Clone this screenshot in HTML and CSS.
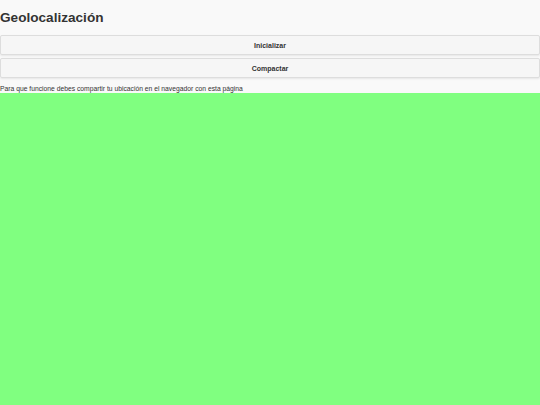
FILE: index.html
```html
<!DOCTYPE html>
<html lang="es">
<head>
<meta charset="utf-8">
<title>Geolocalización</title>
<link rel="stylesheet" href="styles.css">
</head>
<body>
<div class="page">
  <h1 class="title">Geolocalización</h1>
  <div class="buttons">
    <button class="btn" type="button">Inicializar</button>
    <button class="btn" type="button">Compactar</button>
  </div>
  <p class="note">Para que funcione debes compartir tu ubicación en el navegador con esta página</p>
  <div class="map"></div>
</div>
</body>
</html>
```
FILE: styles.css
```css
html, body {
  margin: 0;
  padding: 0;
  height: 100%;
  background: #f9f9f9;
}
.page {
  display: flex;
  flex-direction: column;
  height: 100%;
  font-family: "Liberation Sans", Arial, sans-serif;
  color: #333;
}
.title {
  margin: 0;
  padding: 8px 0 0 0;
  height: 27px;
  box-sizing: border-box;
  font-size: 13.6px;
  font-weight: bold;
  line-height: 19px;
  color: #333;
}
.buttons {
  display: flex;
  flex-direction: column;
  gap: 3px;
  margin-top: 8px;
}
.btn {
  display: block;
  width: 100%;
  height: 20px;
  margin: 0;
  padding: 0;
  border: 1px solid #dddddd;
  border-radius: 2px;
  background: #f6f6f6;
  box-shadow: 0 1px 2px rgba(0,0,0,0.08);
  font-family: "Liberation Sans", Arial, sans-serif;
  font-size: 7px;
  font-weight: bold;
  color: #333;
}
.note {
  margin: 6px 0 0 0;
  font-size: 6.75px;
  line-height: 9px;
  color: #333;
}
.map {
  flex: 1;
  background: #80ff80;
}
```
